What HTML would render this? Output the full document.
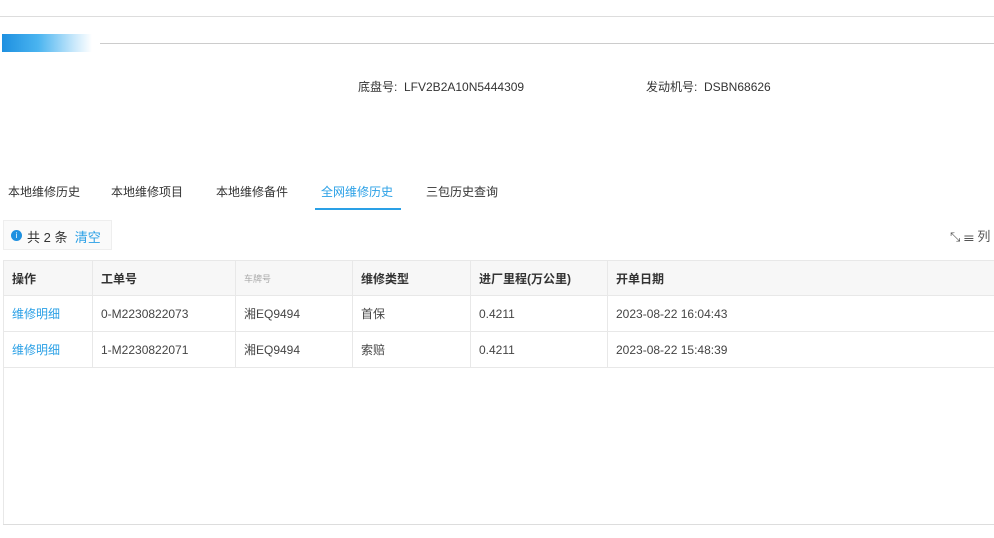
<!DOCTYPE html>
<html><head><meta charset="utf-8"><style>
*{margin:0;padding:0;box-sizing:border-box}
body{width:994px;height:538px;overflow:hidden;background:#fff;font-family:"Liberation Sans","Noto Sans CJK SC",sans-serif;font-size:12px;color:#333;position:relative}
.a{position:absolute}
table{border-collapse:collapse;position:absolute;left:3px;top:260px;width:1000px}
td,th{height:36px;border:1px solid #e8e8e8;padding-left:8px;text-align:left;font-weight:normal;font-size:12px;color:#444}
th{background:#f7f7f7;font-weight:bold;color:#333;height:35px}
.l{color:#2aa0e6}
</style></head><body>
<div class="a" style="left:0;top:16px;width:994px;height:1px;background:#ddd"></div>
<div class="a" style="left:2px;top:34px;width:90px;height:18px;background:linear-gradient(90deg,#1e90e0 0,#4ab4f0 40%,#c8e8fb 80%,#fff 100%)"></div>
<div class="a" style="left:100px;top:43px;width:894px;height:1px;background:#ccc"></div>
<div class="a" style="left:358px;top:78px">底盘号:&nbsp;&nbsp;LFV2B2A10N5444309</div>
<div class="a" style="left:646px;top:78px">发动机号:&nbsp;&nbsp;DSBN68626</div>
<div class="a" style="left:8px;top:183px">本地维修历史</div>
<div class="a" style="left:111px;top:183px">本地维修项目</div>
<div class="a" style="left:216px;top:183px">本地维修备件</div>
<div class="a l" style="left:321px;top:183px">全网维修历史</div>
<div class="a" style="left:426px;top:183px">三包历史查询</div>
<div class="a" style="left:315px;top:208px;width:86px;height:2px;background:#2aa0e6"></div>
<div class="a" style="left:3px;top:220px;width:109px;height:30px;border:1px solid #eee;background:#fafafa"></div>
<div class="a" style="left:11px;top:230px;width:11px;height:11px;border-radius:50%;background:#1e90e0;color:#fff;font-size:8px;text-align:center;line-height:11px">i</div>
<div class="a" style="left:27px;top:227px;font-size:13px">共 2 条&nbsp;&nbsp;<span class="l">清空</span></div>
<div class="a" style="left:950px;top:226px;font-size:13px;color:#555">⤡ ☰ 列</div>
<table>
<tr><th style="width:89px">操作</th><th style="width:143px">工单号</th><th style="width:117px;color:#aaa;font-weight:normal;font-size:9px">车牌号</th><th style="width:118px">维修类型</th><th style="width:137px">进厂里程(万公里)</th><th>开单日期</th></tr>
<tr><td class="l">维修明细</td><td>0-M2230822073</td><td>湘EQ9494</td><td>首保</td><td>0.4211</td><td>2023-08-22 16:04:43</td></tr>
<tr><td class="l">维修明细</td><td>1-M2230822071</td><td>湘EQ9494</td><td>索赔</td><td>0.4211</td><td>2023-08-22 15:48:39</td></tr>
</table>
<div class="a" style="left:3px;top:367px;width:1px;height:158px;background:#e8e8e8"></div>
<div class="a" style="left:3px;top:524px;width:991px;height:1px;background:#ddd"></div>
</body></html>
